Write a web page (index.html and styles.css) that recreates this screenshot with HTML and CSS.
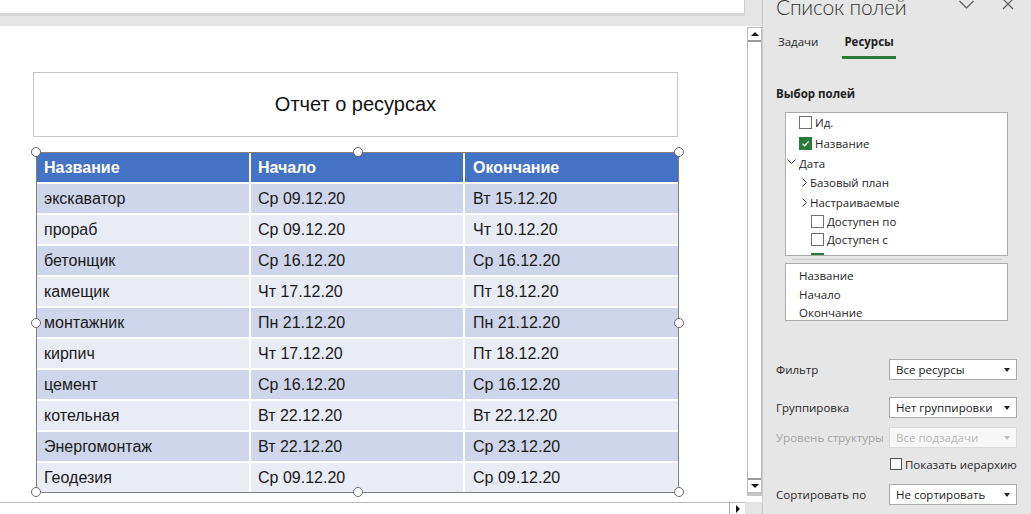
FILE: index.html
```html
<!DOCTYPE html>
<html lang="ru">
<head>
<meta charset="UTF-8">
<title>Отчет о ресурсах</title>
<link rel="stylesheet" href="styles.css">
</head>
<body>
<div class="app">
    <div class="doc">
        <div class="ribbon"></div>
        <div class="work">
            <div class="canvas">
                <div class="report-title">Отчет о ресурсах</div>
                <div class="sel">
                    <div class="grid">
                        <div class="cell head">Название</div>
                        <div class="cell head">Начало</div>
                        <div class="cell head">Окончание</div>

                        <div class="cell dark">экскаватор</div>
                        <div class="cell dark">Ср 09.12.20</div>
                        <div class="cell dark">Вт 15.12.20</div>

                        <div class="cell light">прораб</div>
                        <div class="cell light">Ср 09.12.20</div>
                        <div class="cell light">Чт 10.12.20</div>

                        <div class="cell dark">бетонщик</div>
                        <div class="cell dark">Ср 16.12.20</div>
                        <div class="cell dark">Ср 16.12.20</div>

                        <div class="cell light">камещик</div>
                        <div class="cell light">Чт 17.12.20</div>
                        <div class="cell light">Пт 18.12.20</div>

                        <div class="cell dark">монтажник</div>
                        <div class="cell dark">Пн 21.12.20</div>
                        <div class="cell dark">Пн 21.12.20</div>

                        <div class="cell light">кирпич</div>
                        <div class="cell light">Чт 17.12.20</div>
                        <div class="cell light">Пт 18.12.20</div>

                        <div class="cell dark">цемент</div>
                        <div class="cell dark">Ср 16.12.20</div>
                        <div class="cell dark">Ср 16.12.20</div>

                        <div class="cell light">котельная</div>
                        <div class="cell light">Вт 22.12.20</div>
                        <div class="cell light">Вт 22.12.20</div>

                        <div class="cell dark">Энергомонтаж</div>
                        <div class="cell dark">Вт 22.12.20</div>
                        <div class="cell dark">Ср 23.12.20</div>

                        <div class="cell light">Геодезия</div>
                        <div class="cell light">Ср 09.12.20</div>
                        <div class="cell light">Ср 09.12.20</div>
                    </div>
                    <span class="handle tl"></span>
                    <span class="handle tm"></span>
                    <span class="handle tr"></span>
                    <span class="handle ml"></span>
                    <span class="handle mr"></span>
                    <span class="handle bl"></span>
                    <span class="handle bm"></span>
                    <span class="handle br"></span>
                </div>
            </div>
            <div class="vscroll">
                <div class="sbtn up"><span class="tri-up"></span></div>
                <div class="track"></div>
                <div class="sbtn down"><span class="tri-down"></span></div>
            </div>
        </div>
        <div class="hscroll">
            <div class="sbtn right"><span class="tri-right"></span></div>
        </div>
    </div>

    <aside class="panel">
        <div class="panel-head">
            <h2>Список полей</h2>
            <svg class="chev-btn" width="15" height="9" viewBox="0 0 15 9"><path d="M0.5 1 L7.5 8 L14.5 1" fill="none" stroke="#555" stroke-width="1.1"/></svg>
            <svg class="close-btn" width="12" height="12" viewBox="0 0 12 12"><path d="M1 1 L11 11 M11 1 L1 11" fill="none" stroke="#555" stroke-width="1.1"/></svg>
        </div>
        <nav class="tabs">
            <span class="tab">Задачи</span>
            <span class="tab active">Ресурсы</span>
        </nav>
        <div class="section-title">Выбор полей</div>
        <div class="tree">
            <div class="item lv1"><span class="check"></span>Ид.</div>
            <div class="item lv1 tall"><span class="check on"><svg width="11" height="11" viewBox="0 0 11 11"><path d="M2.5 5.8 L4.6 7.8 L8.6 3.5" fill="none" stroke="#fff" stroke-width="1.4"/></svg></span>Название</div>
            <div class="item lv0"><svg class="exp" width="11" height="6" viewBox="0 0 11 6"><path d="M0.5 0.5 L4.5 4.5 L8.5 0.5" fill="none" stroke="#333" stroke-width="1"/></svg>Дата</div>
            <div class="item lv2"><svg class="col" width="8" height="9" viewBox="0 0 8 9"><path d="M0.5 0.5 L4.5 4.5 L0.5 8.5" fill="none" stroke="#333" stroke-width="1"/></svg>Базовый план</div>
            <div class="item lv2"><svg class="col" width="8" height="9" viewBox="0 0 8 9"><path d="M0.5 0.5 L4.5 4.5 L0.5 8.5" fill="none" stroke="#333" stroke-width="1"/></svg>Настраиваемые</div>
            <div class="item lv3 short"><span class="check"></span>Доступен по</div>
            <div class="item lv3"><span class="check"></span>Доступен с</div>
            <div class="item lv3"><span class="check on"></span></div>
        </div>
        <div class="divider"></div>
        <div class="fields">
            <div class="field">Название</div>
            <div class="field">Начало</div>
            <div class="field">Окончание</div>
        </div>

        <div class="opts">
            <div class="opt filter">
                <span class="opt-label">Фильтр</span>
                <span class="select">Все ресурсы</span>
            </div>
            <div class="opt group">
                <span class="opt-label">Группировка</span>
                <span class="select">Нет группировки</span>
            </div>
            <div class="opt level disabled">
                <span class="opt-label">Уровень структуры</span>
                <span class="select">Все подзадачи</span>
            </div>
            <div class="opt hier">
                <span class="check"></span>Показать иерархию
            </div>
            <div class="opt sort">
                <span class="opt-label">Сортировать по</span>
                <span class="select">Не сортировать</span>
            </div>
        </div>
    </aside>
</div>
</body>
</html>
```

FILE: styles.css
```css
*{
    box-sizing: border-box;
}
body{
    margin: 0;
    width: 1031px;
    height: 514px;
    overflow: hidden;
    background: #e6e6e6;
    font-family: "Liberation Sans", Arial, sans-serif;
    color: #1a1a1a;
}
.app{
    display: flex;
    height: 514px;
}

/* left document area */
.doc{
    width: 763px;
    display: flex;
    flex-direction: column;
    background: #e4e4e4;
    border-right: 1px solid #c9c9c9;
}
.ribbon{
    width: 745px;
    height: 16px;
    margin-bottom: 10px;
    background: #fff;
    border-right: 1px solid #cdcdcd;
    border-bottom: 3px solid #d8d8d8;
}
.work{
    display: flex;
    height: 476px;
    background: #fff;
}
.canvas{
    width: 747px;
    padding: 46px 0 0 33px;
}
.report-title{
    width: 645px;
    height: 65px;
    border: 1px solid #c8c8c8;
    display: flex;
    align-items: center;
    justify-content: center;
    font-size: 20px;
    color: #111;
}
.sel{
    position: relative;
    width: 643px;
    margin: 15px 0 0 3px;
    border: 1px solid #808080;
}
.grid{
    display: grid;
    grid-template-columns: 212px 214px 215px;
}
.cell{
    height: 31px;
    padding-left: 7px;
    display: flex;
    align-items: center;
    font-size: 16px;
    border-top: 2px solid #fff;
}
.cell:nth-child(3n+2), .cell:nth-child(3n){
    border-left: 2px solid #fff;
}
.cell:nth-child(3n){
    padding-left: 8px;
}
.cell.head{
    height: 29px;
    border-top: 0;
    background: #4472c4;
    color: #fff;
    font-weight: bold;
}
.cell.dark{
    background: #cfd5ea;
}
.cell.light{
    background: #e9ebf5;
}
.handle{
    position: absolute;
    width: 10px;
    height: 10px;
    border: 1.5px solid #686868;
    border-radius: 50%;
    background: #fff;
    transform: translate(-50%, -50%);
}
.tl{ left: -1px; top: -1px; }
.tm{ left: 50%; top: -1px; }
.tr{ left: calc(100% + 1px); top: -1px; }
.ml{ left: -1px; top: 50%; }
.mr{ left: calc(100% + 1px); top: 50%; }
.bl{ left: -1px; top: 100%; }
.bm{ left: 50%; top: 100%; }
.br{ left: calc(100% + 1px); top: 100%; }

.vscroll{
    width: 15px;
    height: 469px;
    margin-top: 1px;
    display: flex;
    flex-direction: column;
    border-left: 1px solid #bdbdbd;
    border-right: 1px solid #bdbdbd;
    border-bottom: 3px solid #c4c4c4;
}
.sbtn{
    height: 15px;
    display: flex;
    align-items: center;
    justify-content: center;
    background: #fff;
}
.sbtn.up{
    border-top: 1px solid #bdbdbd;
    border-bottom: 2px solid #9a9a9a;
}
.sbtn.down{
    border-top: 2px solid #9a9a9a;
    border-bottom: 1px solid #bdbdbd;
}
.track{
    flex: 1;
}
.tri-up{
    border-left: 4px solid transparent;
    border-right: 4px solid transparent;
    border-bottom: 4px solid #111;
}
.tri-down{
    border-left: 4px solid transparent;
    border-right: 4px solid transparent;
    border-top: 4px solid #111;
}
.tri-right{
    border-top: 4px solid transparent;
    border-bottom: 4px solid transparent;
    border-left: 4px solid #111;
}
.hscroll{
    height: 12px;
    width: 745px;
    background: #fff;
    border-top: 1px solid #b8b8b8;
    display: flex;
    justify-content: flex-end;
}
.sbtn.right{
    width: 16px;
    height: 11px;
    border-left: 1px solid #a8a8a8;
}

/* field list panel */
.panel{
    width: 268px;
    padding-left: 13px;
    font-family: "Open Sans", "Noto Sans", sans-serif;
    font-size: 11.5px;
    color: #262626;
}
.panel-head{
    position: relative;
    display: flow-root;
    height: 21px;
}
.panel-head h2{
    margin: -6px 0 0;
    font-family: Lato, "Open Sans", sans-serif;
    font-weight: 300;
    font-size: 21px;
    line-height: 26px;
    color: #333;
    letter-spacing: -0.2px;
}
.chev-btn{
    position: absolute;
    left: 183px;
    top: 0;
}
.close-btn{
    position: absolute;
    left: 226px;
    top: -2px;
}
.tabs{
    display: flex;
    gap: 22px;
    margin-top: 13px;
}
.tab{
    padding: 0 2px 6px;
    line-height: 16px;
    border-bottom: 3px solid transparent;
}
.tab.active{
    font-weight: bold;
    color: #222;
    border-bottom-color: #2c7a38;
}
.section-title{
    margin-top: 27px;
    line-height: 16px;
    font-weight: bold;
    color: #222;
}
.tree{
    width: 223px;
    height: 144px;
    margin: 10px 0 0 9px;
    background: #fff;
    border: 1px solid #ababab;
    overflow: hidden;
}
.item{
    height: 19.5px;
    display: flex;
    align-items: center;
    white-space: nowrap;
}
.item.tall{
    height: 21px;
}
.item.short{
    height: 18px;
}
.lv0{ padding-left: 1px; }
.lv1{ padding-left: 13px; }
.lv2{ padding-left: 16px; }
.lv3{ padding-left: 25px; }
.exp{
    margin-right: 1px;
    margin-top: -2px;
}
.check{
    width: 13px;
    height: 13px;
    margin-right: 3px;
    border: 1px solid #6f6f6f;
    background: #fff;
    display: inline-flex;
    align-items: center;
    justify-content: center;
    flex: none;
}
.check.on{
    background: #2b7a37;
    border-color: #2b7a37;
}
.divider{
    width: 210px;
    height: 1px;
    margin: 3px 0 0 16px;
    background: #c6c6c6;
}
.fields{
    width: 223px;
    height: 58px;
    margin: 3px 0 0 9px;
    padding-top: 3px;
    background: #fff;
    border: 1px solid #ababab;
}
.field{
    height: 18.5px;
    line-height: 18.5px;
    padding-left: 13px;
}
.opts{
    margin-top: 38px;
}
.opt{
    display: flex;
    align-items: center;
}
.opt-label{
    width: 113px;
}
.select{
    position: relative;
    width: 128px;
    height: 21px;
    padding-left: 6px;
    display: flex;
    align-items: center;
    background: #fff;
    border: 1px solid #a9a9a9;
    color: #1a1a1a;
}
.select::after{
    content: "";
    position: absolute;
    right: 6px;
    top: 8px;
    border-left: 3.5px solid transparent;
    border-right: 3.5px solid transparent;
    border-top: 4px solid #222;
}
.group{
    margin-top: 17px;
}
.level{
    margin-top: 9px;
}
.disabled .opt-label{
    color: #a3a3a3;
}
.disabled .select{
    color: #b9b9b9;
    border-color: #dadada;
    background: #f7f7f7;
}
.disabled .select::after{
    border-top-color: #c2c2c2;
}
.hier{
    margin: 9px 0 0 114px;
    height: 14px;
}
.hier .check{
    width: 12px;
    height: 12px;
    border-color: #555;
}
.sort{
    margin-top: 13px;
}
```
